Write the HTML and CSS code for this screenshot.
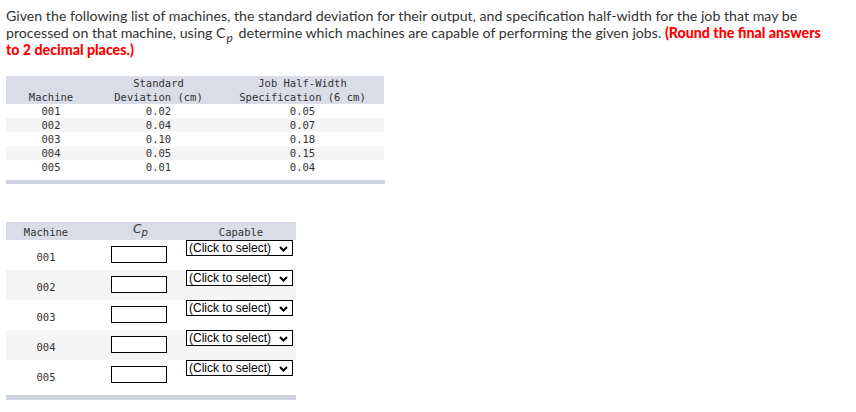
FILE: index.html
```html
<!DOCTYPE html>
<html>
<head>
<meta charset="utf-8">
<link rel="stylesheet" href="styles.css">
</head>
<body>
<div class="page">
  <p class="question">Given the following list of machines, the standard deviation for their output, and specification half-width for the job that may be processed on that machine, using C<sub class="sub">p</sub> determine which machines are capable of performing the given jobs. <strong class="note">(Round the final answers<br>to 2 decimal places.)</strong></p>

  <div class="data-wrap">
    <table class="data">
      <colgroup><col class="c1"><col class="c2"><col class="c3"></colgroup>
      <thead>
        <tr><th>Machine</th><th>Standard<br>Deviation (cm)</th><th>Job Half-Width<br>Specification (6 cm)</th></tr>
      </thead>
      <tbody>
        <tr><td>001</td><td>0.02</td><td>0.05</td></tr>
        <tr class="alt"><td>002</td><td>0.04</td><td>0.07</td></tr>
        <tr><td>003</td><td>0.10</td><td>0.18</td></tr>
        <tr class="alt"><td>004</td><td>0.05</td><td>0.15</td></tr>
        <tr><td>005</td><td>0.01</td><td>0.04</td></tr>
      </tbody>
    </table>
  </div>

  <div class="answer-wrap">
    <table class="answer">
      <colgroup><col class="a1"><col class="a2"><col class="a3"></colgroup>
      <thead>
        <tr><th>Machine</th><th class="cp-head"><i>C<sub>p</sub></i></th><th>Capable</th></tr>
      </thead>
      <tbody>
        <tr><td class="m">001</td><td class="in"><input type="text" class="box"></td><td class="sel"><span class="select-wrap"><select class="choice"><option>(Click to select)</option></select><svg class="chev" width="9" height="6" viewBox="0 0 9 6"><path d="M1 1 L4.5 4.5 L8 1" fill="none" stroke="#000" stroke-width="2"/></svg></span></td></tr>
        <tr class="alt"><td class="m">002</td><td class="in"><input type="text" class="box"></td><td class="sel"><span class="select-wrap"><select class="choice"><option>(Click to select)</option></select><svg class="chev" width="9" height="6" viewBox="0 0 9 6"><path d="M1 1 L4.5 4.5 L8 1" fill="none" stroke="#000" stroke-width="2"/></svg></span></td></tr>
        <tr><td class="m">003</td><td class="in"><input type="text" class="box"></td><td class="sel"><span class="select-wrap"><select class="choice"><option>(Click to select)</option></select><svg class="chev" width="9" height="6" viewBox="0 0 9 6"><path d="M1 1 L4.5 4.5 L8 1" fill="none" stroke="#000" stroke-width="2"/></svg></span></td></tr>
        <tr class="alt"><td class="m">004</td><td class="in"><input type="text" class="box"></td><td class="sel"><span class="select-wrap"><select class="choice"><option>(Click to select)</option></select><svg class="chev" width="9" height="6" viewBox="0 0 9 6"><path d="M1 1 L4.5 4.5 L8 1" fill="none" stroke="#000" stroke-width="2"/></svg></span></td></tr>
        <tr><td class="m">005</td><td class="in"><input type="text" class="box"></td><td class="sel"><span class="select-wrap"><select class="choice"><option>(Click to select)</option></select><svg class="chev" width="9" height="6" viewBox="0 0 9 6"><path d="M1 1 L4.5 4.5 L8 1" fill="none" stroke="#000" stroke-width="2"/></svg></span></td></tr>
      </tbody>
    </table>
  </div>
</div>
</body>
</html>
```

FILE: styles.css
```css
html, body {
  margin: 0;
  padding: 0;
  background: #fff;
}

.page {
  padding: 7px 6px 0 6px;
}

.question {
  margin: 0;
  font-family: Lato, "Liberation Sans", sans-serif;
  font-size: 14.2px;
  line-height: 17px;
  color: #333;
  width: 844px;
}

.sub {
  font-size: 12px;
  font-style: italic;
  line-height: 0;
  vertical-align: -4px;
  padding: 0 2px 0 1px;
}

.note {
  color: #f00;
  font-weight: 900;
}

.data-wrap {
  margin-top: 18px;
  width: 379px;
  border-bottom: 4px solid #cdd2de;
  padding-bottom: 6px;
}

table {
  border-collapse: collapse;
  border-spacing: 0;
  table-layout: fixed;
  font-family: "DejaVu Sans Mono", "Liberation Mono", monospace;
  font-size: 10.5px;
  color: #333;
}

th {
  font-weight: normal;
  background: #dadde7;
  padding: 0;
  text-align: center;
  vertical-align: bottom;
}

td {
  padding: 0;
  text-align: center;
}

.data {
  width: 378px;
}

.data .c1 { width: 90px; }
.data .c2 { width: 125px; }
.data .c3 { width: 163px; }

.data th,
.data td {
  line-height: 14px;
}

.alt td {
  background: #f5f5f5;
}

.answer-wrap {
  margin-top: 38px;
  width: 290px;
  border-bottom: 5px solid #cdd2de;
  padding-bottom: 5px;
}

.answer {
  width: 290px;
}

.answer .a1 { width: 80px; }
.answer .a2 { width: 100px; }
.answer .a3 { width: 110px; }

.answer th {
  height: 18px;
  line-height: 15px;
}

.answer .cp-head {
  text-align: left;
  padding-left: 47px;
  font-family: "DejaVu Sans", sans-serif;
  font-size: 12px;
  vertical-align: top;
  line-height: 14px;
}

.answer .cp-head sub {
  font-size: 10px;
  vertical-align: -3px;
  line-height: 0;
}

.answer td {
  height: 30px;
  box-sizing: border-box;
}

.answer td.m {
  vertical-align: middle;
  padding-top: 3px;
}

.answer td.in {
  text-align: left;
  padding-left: 25px;
  vertical-align: top;
}

.box {
  display: block;
  box-sizing: border-box;
  width: 56px;
  height: 17px;
  margin-top: 6px;
  border: 1px solid #000;
  padding: 0;
  background: #fff;
}

.answer td.sel {
  text-align: left;
  vertical-align: top;
}

.select-wrap {
  position: relative;
  display: block;
  width: 107px;
  height: 16px;
}

.choice {
  appearance: none;
  -webkit-appearance: none;
  box-sizing: border-box;
  display: block;
  width: 107px;
  height: 16px;
  border: 1px solid #000;
  border-radius: 0;
  background: #fff;
  padding: 0 0 0 2px;
  margin: 0;
  font-family: "Liberation Sans", Arial, sans-serif;
  font-size: 12px;
  line-height: 14px;
  color: #000;
}

.chev {
  position: absolute;
  right: 5px;
  top: 6px;
  pointer-events: none;
}
```
